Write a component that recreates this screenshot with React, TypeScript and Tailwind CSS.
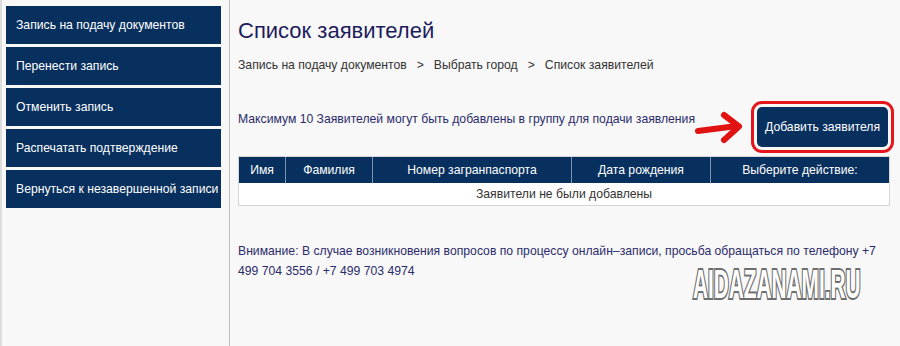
import React from "react";

const menu = [
  "Запись на подачу документов",
  "Перенести запись",
  "Отменить запись",
  "Распечатать подтверждение",
  "Вернуться к незавершенной записи",
];

const columns = [
  { title: "Имя", w: "w-[46px]" },
  { title: "Фамилия", w: "w-[87px]" },
  { title: "Номер загранпаспорта", w: "w-[199px]" },
  { title: "Дата рождения", w: "w-[139px]" },
  { title: "Выберите действие:", w: "" },
];

const App = () => {
  return (
    <div className="w-[900px] h-[346px] bg-[#f8f8f8] flex font-['Liberation_Sans',Arial,sans-serif] overflow-hidden">
      {/* Sidebar */}
      <aside className="w-[230px] shrink-0 border-l-2 border-r border-l-[#dcdcdc] border-r-[#bdbdbd] pl-[4px] pt-[6px] flex flex-col gap-[3px]">
        {menu.map((item) => (
          <div
            key={item}
            className="w-[215px] h-[38px] bg-[#08305e] text-white text-[12.2px] flex items-center pl-[10px] whitespace-nowrap"
          >
            {item}
          </div>
        ))}
      </aside>

      {/* Main */}
      <main className="flex-1 pl-[8px] pr-[10px] pt-[18px] relative">
        <h1 className="text-[22px] leading-[26px] text-[#1c1c5c]">Список заявителей</h1>
        <div className="mt-[12px] text-[12.2px] text-[#333] flex gap-[10px]">
          <span>Запись на подачу документов</span>
          <span>&gt;</span>
          <span>Выбрать город</span>
          <span>&gt;</span>
          <span>Список заявителей</span>
        </div>

        <div className="mt-[33px] flex items-start justify-between w-[652px]">
          <p className="text-[12.2px] text-[#2b2b6b] mt-[3px] whitespace-nowrap">
            Максимум 10 Заявителей могут быть добавлены в группу для подачи заявления
          </p>
          <div className="flex items-start">
            <svg width="48" height="36" viewBox="0 0 48 36" className="mr-[14px] mt-[3px]">
              <path d="M3 21 L42 16" stroke="#e01212" strokeWidth="6" strokeLinecap="round" />
              <path d="M29 5 L44 16.5 L29 30" stroke="#e01212" strokeWidth="6" fill="none" strokeLinecap="round" strokeLinejoin="round" />
            </svg>
            <button className="mr-[5px] h-[40px] px-[8px] bg-[#08305e] text-white text-[12.2px] rounded-[5px] whitespace-nowrap outline-[3px] outline-solid outline-[#e5161b] outline-offset-[3px]">
              Добавить заявителя
            </button>
          </div>
        </div>

        <div className="mt-[9px] w-[652px] border border-[#d6d6d6] text-[12.2px]">
          <div className="flex h-[26px] bg-[#08305e] text-white">
            {columns.map((c, i) => (
              <div
                key={c.title}
                className={`${c.w || "flex-1"} flex items-center justify-center ${i > 0 ? "border-l border-[#7d93b3]" : ""}`}
              >
                {c.title}
              </div>
            ))}
          </div>
          <div className="h-[22px] bg-white flex items-center justify-center text-[#333]">
            Заявители не были добавлены
          </div>
        </div>

        <p className="mt-[35px] text-[12.2px] leading-[20px] text-[#2b2b6b] w-[652px]">
          Внимание: В случае возникновения вопросов по процессу онлайн–записи, просьба обращаться по телефону +7 499 704 3556 / +7 499 703 4974
        </p>

        <div className="absolute left-[463px] top-[268px] origin-left scale-x-[0.52] text-[40px] leading-[32px] font-bold text-white whitespace-nowrap [-webkit-text-stroke:4px_#6e6e6e] [paint-order:stroke_fill]">
          AIDAZANAMI.RU
        </div>
      </main>
    </div>
  );
};

export default App;
